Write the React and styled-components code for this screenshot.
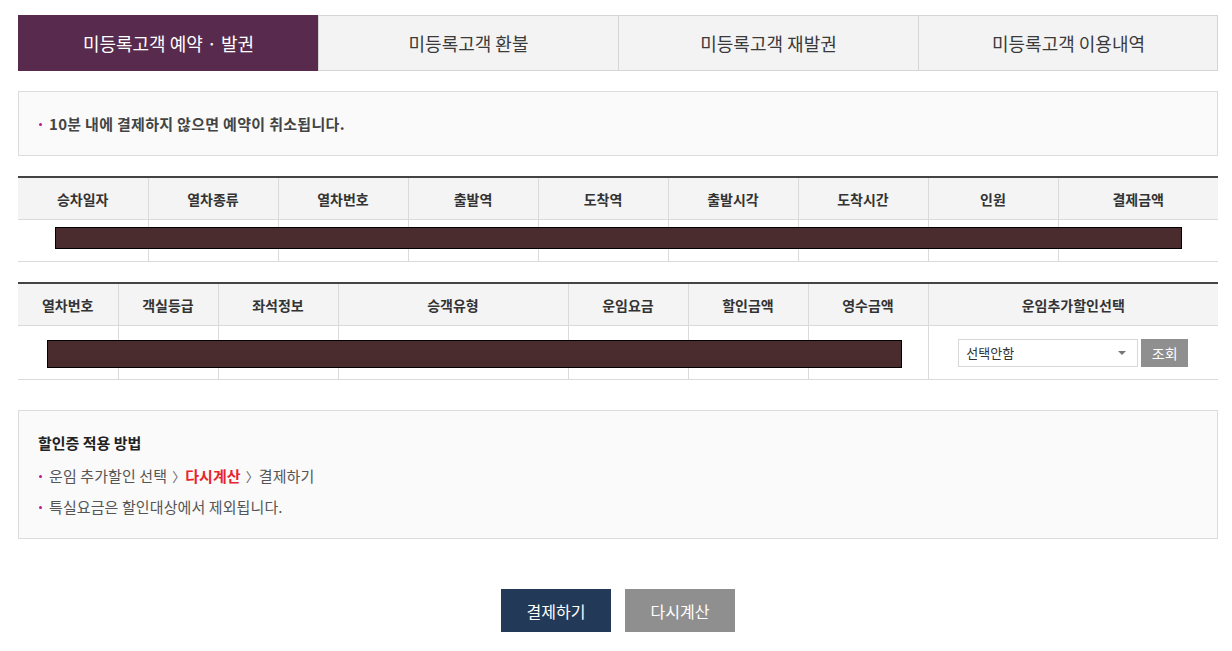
import React from 'react';
import styled, { createGlobalStyle } from 'styled-components';

const GlobalStyle = createGlobalStyle`
  body {
    margin: 0;
    background: #fff;
    font-family: "Noto Sans CJK KR", "Noto Sans", sans-serif;
    color: #333;
  }
`;

const tabs = ['미등록고객 예약 · 발권', '미등록고객 환불', '미등록고객 재발권', '미등록고객 이용내역'];

const trainCols = [
  ['승차일자', 130], ['열차종류', 130], ['열차번호', 130], ['출발역', 130], ['도착역', 130],
  ['출발시각', 130], ['도착시간', 130], ['인원', 130], ['결제금액', 160],
];

const fareCols = [
  ['열차번호', 100], ['객실등급', 100], ['좌석정보', 120], ['승객유형', 230], ['운임요금', 120],
  ['할인금액', 120], ['영수금액', 120], ['운임추가할인선택', 290],
];

function App() {
  return (
    <Page>
      <GlobalStyle />
      <TabBar>
        {tabs.map((t, i) => (
          <Tab key={t} active={i === 0}>{t}</Tab>
        ))}
      </TabBar>

      <NoticeBox>
        <Bullet bold>10분 내에 결제하지 않으면 예약이 취소됩니다.</Bullet>
      </NoticeBox>

      <TableWrap>
        <Table>
          <colgroup>
            {trainCols.map(([n, w]) => <col key={n} style={{ width: w }} />)}
          </colgroup>
          <thead>
            <tr>{trainCols.map(([n]) => <Th key={n}>{n}</Th>)}</tr>
          </thead>
          <tbody>
            <tr>{trainCols.map(([n]) => <Td key={n} h={41} />)}</tr>
          </tbody>
        </Table>
        <Redact top={49} left={37} width={1127} height={22} />
      </TableWrap>

      <TableWrap>
        <Table>
          <colgroup>
            {fareCols.map(([n, w]) => <col key={n} style={{ width: w }} />)}
          </colgroup>
          <thead>
            <tr>{fareCols.map(([n]) => <Th key={n}>{n}</Th>)}</tr>
          </thead>
          <tbody>
            <tr>
              {fareCols.slice(0, 7).map(([n]) => <Td key={n} h={53} />)}
              <Td h={53}>
                <SelectRow>
                  <FakeSelect>
                    <span>선택안함</span>
                    <Caret />
                  </FakeSelect>
                  <SmallButton>조회</SmallButton>
                </SelectRow>
              </Td>
            </tr>
          </tbody>
        </Table>
        <Redact top={56} left={29} width={855} height={28} />
      </TableWrap>

      <GuideBox>
        <GuideTitle>할인증 적용 방법</GuideTitle>
        <Bullet>
          운임 추가할인 선택<Arrow>〉</Arrow><Red>다시계산</Red><Arrow>〉</Arrow>결제하기
        </Bullet>
        <Bullet>특실요금은 할인대상에서 제외됩니다.</Bullet>
      </GuideBox>

      <ButtonRow>
        <ActionButton color="#223a58">결제하기</ActionButton>
        <ActionButton color="#8f8f8f">다시계산</ActionButton>
      </ButtonRow>
    </Page>
  );
}

const Page = styled.div`
  width: 1200px;
  padding: 15px 0 19px 18px;
`;

const TabBar = styled.div`
  display: flex;
  border: 1px solid #d5d5d5;
  border-left: none;
  background: #f3f3f3;
`;

const Tab = styled.div`
  flex: 0 0 300px;
  display: flex;
  align-items: center;
  justify-content: center;
  font-size: 18px;
  color: ${p => (p.active ? '#fff' : '#3a3a3a')};
  background: ${p => (p.active ? '#582b4e' : 'transparent')};
  margin: ${p => (p.active ? '-1px 0' : '0')};
  height: ${p => (p.active ? '56px' : '54px')};
  box-sizing: border-box;
  border-left: 1px solid ${p => (p.active ? '#582b4e' : '#d5d5d5')};
`;

const NoticeBox = styled.div`
  margin-top: 20px;
  height: 63px;
  border: 1px solid #dcdcdc;
  background: #fafafa;
  padding: 0 19px;
  display: flex;
  align-items: center;
`;

const Bullet = styled.div`
  position: relative;
  padding-left: 11px;
  font-size: 15px;
  line-height: 30px;
  letter-spacing: ${p => (p.bold ? '0.3px' : '0.1px')};
  color: ${p => (p.bold ? '#444' : '#555')};
  font-weight: ${p => (p.bold ? 600 : 400)};
  &::before {
    content: '';
    position: absolute;
    left: 1px;
    top: 14px;
    width: 3px;
    height: 3px;
    border-radius: 50%;
    background: #c2148c;
  }
`;

const TableWrap = styled.div`
  position: relative;
  margin-top: 20px;
  border-top: 2px solid #444;
`;

const Table = styled.table`
  width: 1200px;
  table-layout: fixed;
  border-collapse: collapse;
`;

const Th = styled.th`
  height: 41px;
  padding: 0;
  background: #f4f4f4;
  border-left: 1px solid #dadada;
  border-bottom: 1px solid #dadada;
  font-size: 14px;
  font-weight: 700;
  color: #333;
  text-align: center;
  &:first-child { border-left: none; }
`;

const Td = styled.td`
  height: ${p => p.h}px;
  padding: 0;
  border-left: 1px solid #dadada;
  border-bottom: 1px solid #dadada;
  &:first-child { border-left: none; }
`;

const Redact = styled.div`
  position: absolute;
  top: ${p => p.top}px;
  left: ${p => p.left}px;
  width: ${p => p.width}px;
  height: ${p => p.height}px;
  box-sizing: border-box;
  background: #4a2c2f;
  border: 1px solid #000;
`;

const SelectRow = styled.div`
  display: flex;
  justify-content: center;
  gap: 3px;
`;

const FakeSelect = styled.div`
  width: 180px;
  height: 28px;
  box-sizing: border-box;
  border: 1px solid #d8d8d8;
  background: #fff;
  display: flex;
  align-items: center;
  justify-content: space-between;
  padding: 0 11px 0 7px;
  font-size: 13px;
  color: #333;
`;

const Caret = styled.span`
  width: 0;
  height: 0;
  border-left: 4px solid transparent;
  border-right: 4px solid transparent;
  border-top: 4px solid #777;
`;

const SmallButton = styled.div`
  width: 47px;
  height: 28px;
  background: #8f8f8f;
  color: #fff;
  font-size: 14px;
  display: flex;
  align-items: center;
  justify-content: center;
`;

const GuideBox = styled.div`
  margin-top: 30px;
  border: 1px solid #dcdcdc;
  background: #fafafa;
  padding: 17px 19px 16px;
`;

const GuideTitle = styled.div`
  font-size: 15px;
  font-weight: 700;
  color: #222;
  line-height: 30px;
  margin-bottom: 3px;
`;

const Arrow = styled.span`
  color: #666;
  font-size: 13px;
  letter-spacing: -6px;
  margin: 0 6px 0 5px;
`;

const Red = styled.span`
  color: #e8242f;
  font-weight: 700;
`;

const ButtonRow = styled.div`
  margin-top: 50px;
  display: flex;
  justify-content: center;
  gap: 14px;
`;

const ActionButton = styled.div`
  width: 110px;
  height: 43px;
  background: ${p => p.color};
  color: #fff;
  font-size: 16px;
  display: flex;
  align-items: center;
  justify-content: center;
`;

export default App;
